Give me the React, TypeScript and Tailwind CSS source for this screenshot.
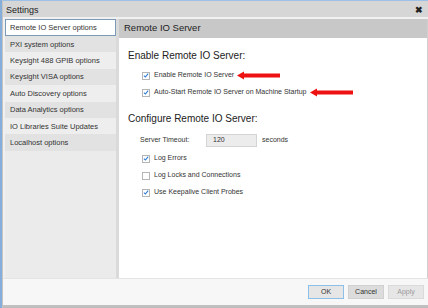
import React from 'react'

const menu = [
    'Remote IO Server options',
    'PXI system options',
    'Keysight 488 GPIB options',
    'Keysight VISA options',
    'Auto Discovery options',
    'Data Analytics options',
    'IO Libraries Suite Updates',
    'Localhost options',
]

const Check = ({ checked }: { checked: boolean }) => (
    <span className="w-[8px] h-[8px] border border-[#b5b5b5] bg-white flex items-center justify-center shrink-0">
        {checked && (
            <svg width="7" height="7" viewBox="0 0 10 10">
                <path d="M1.5 5.2 L4 7.6 L8.6 1.8" fill="none" stroke="#2a7bd0" strokeWidth="1.8" />
            </svg>
        )}
    </span>
)

const Arrow = () => (
    <svg width="43" height="9" viewBox="0 0 43 9" className="shrink-0">
        <path d="M0 4.5 L7 0.5 L7 2.5 L43 2.5 L43 6.5 L7 6.5 L7 8.5 Z" fill="#ee1111" />
    </svg>
)

const CheckRow = ({ label, checked, arrow }: { label: string; checked: boolean; arrow?: boolean }) => (
    <div className="flex items-center h-[17px] pl-[14px]">
        <Check checked={checked} />
        <span className="ml-[4px] text-[7px] text-[#333]">{label}</span>
        {arrow && <span className="ml-[3px] flex"><Arrow /></span>}
    </div>
)

const App = () => {
    return (
        <div
            className="w-[428px] h-[308px] flex bg-[#bcbcbc] overflow-hidden"
            style={{ fontFamily: '"Liberation Sans", Arial, sans-serif' }}
        >
            <div className="w-[2px] bg-[#86aedb]" />
            <div className="flex-1 flex flex-col border-l border-[#c4c4c4]">
                {/* title bar */}
                <div className="h-[17px] bg-[#d6d6d6] flex items-center justify-between pl-[3px] pr-[5px] pt-[3px] border-t border-[#9cc0e6]">
                    <span className="text-[9px] text-[#222]">Settings</span>
                    <span className="text-[9px] font-bold text-[#222] leading-none">✖</span>
                </div>

                {/* body */}
                <div className="h-[261px] flex bg-[#f0f0f0] pt-[2px] pl-[2px]">
                    <div className="w-[111px] bg-[#ebebeb] flex flex-col">
                        {menu.map((m, i) => (
                            <div
                                key={m}
                                className={
                                    i === 0
                                        ? 'h-[17px] flex items-center px-[4px] bg-white border border-[#7b9ab8] text-[7.5px] text-[#333]'
                                        : i % 2 === 1
                                        ? 'h-[16.4px] flex items-center px-[5px] bg-[#e2e2e2] text-[7.5px] text-[#333]'
                                        : 'h-[16.4px] flex items-center px-[5px] bg-[#eeeeee] text-[7.5px] text-[#333]'
                                }
                            >
                                {m}
                            </div>
                        ))}
                    </div>
                    <div className="w-[3px] bg-[#dadada]" />
                    <div className="flex-1 flex flex-col bg-white border-r border-[#cfcfcf]">
                        <div className="h-[19px] bg-[#c8c8c8] flex items-center pl-[5px] text-[9.5px] text-[#222]">
                            Remote IO Server
                        </div>
                        <div className="flex flex-col pl-[9px]">
                            <div className="mt-[11px] h-[12px] flex items-center text-[10px] text-[#222]">
                                Enable Remote IO Server:
                            </div>
                            <div className="mt-[6px]">
                                <CheckRow label="Enable Remote IO Server" checked arrow />
                                <CheckRow label="Auto-Start Remote IO Server on Machine Startup" checked arrow />
                            </div>
                            <div className="mt-[11px] h-[12px] flex items-center text-[10px] text-[#222]">
                                Configure Remote IO Server:
                            </div>
                            <div className="mt-[9px] flex items-center h-[14px] pl-[12px]">
                                <span className="w-[66px] text-[7px] text-[#333]">Server Timeout:</span>
                                <span className="w-[51px] h-[13px] bg-[#ececec] border border-[#d4d4d4] flex items-center pl-[6px] text-[7px] text-[#333]">
                                    120
                                </span>
                                <span className="ml-[5px] text-[7px] text-[#333]">seconds</span>
                            </div>
                            <div className="mt-[3px]">
                                <CheckRow label="Log Errors" checked />
                                <CheckRow label="Log Locks and Connections" checked={false} />
                                <CheckRow label="Use Keepalive Client Probes" checked />
                            </div>
                        </div>
                    </div>
                </div>

                {/* footer */}
                <div className="h-[27px] bg-[#f7f7f7] border-t border-[#e4e4e4] flex items-center justify-end gap-[4px] pr-[4px]">
                    <button className="w-[36px] h-[14px] bg-[#e6e6e6] border border-[#8cc0e8] text-[7px] text-[#333]">OK</button>
                    <button className="w-[36px] h-[14px] bg-[#dcdcdc] border border-[#d0d0d0] text-[7px] text-[#333]">Cancel</button>
                    <button className="w-[36px] h-[14px] bg-[#e6e6e6] border border-[#dadada] text-[7px] text-[#9a9a9a]">Apply</button>
                </div>
                <div className="h-[2px] bg-[#c0c0c0]" />
            </div>
        </div>
    )
}

export default App
